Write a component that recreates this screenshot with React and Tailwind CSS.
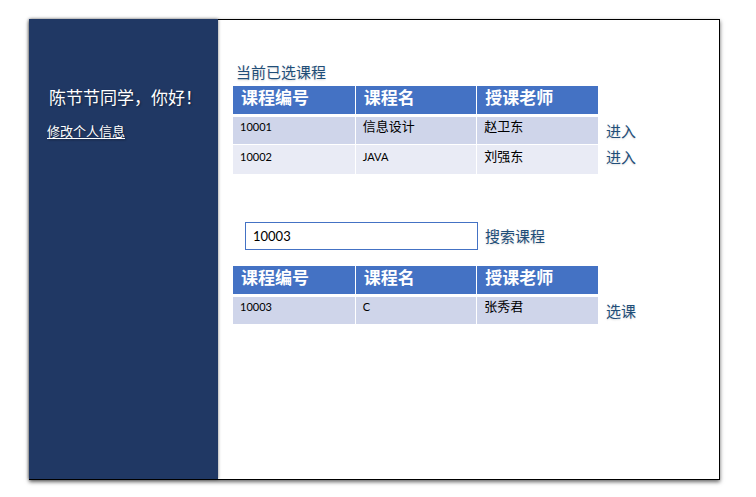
import React, { useState } from 'react';

const columns = ['课程编号', '课程名', '授课老师'];

const selectedCourses = [
  { id: '10001', name: '信息设计', teacher: '赵卫东' },
  { id: '10002', name: 'JAVA', teacher: '刘强东' },
];

const searchResults = [{ id: '10003', name: 'C', teacher: '张秀君' }];

// Latin codes and names are set smaller than the Chinese text beside them.
function Cell({ children }) {
  const latin = /^[\x20-\x7e]+$/.test(children);
  return (
    <td className="border-b border-l border-white p-0 pl-[7px] align-top first:border-l-0 group-even:pt-0.5">
      <span className={latin ? 'block text-[11px] leading-5' : 'block text-[13px] leading-[18px]'}>
        {children}
      </span>
    </td>
  );
}

function CourseTable({ label, courses, action }) {
  return (
    <div className="flex">
      <div className="flex-1">
        <table
          aria-label={label}
          className="w-full table-fixed border-separate border-spacing-0 text-left text-black"
        >
          <thead>
            <tr className="h-[31px] text-[17px] leading-6 text-white">
              {columns.map((c) => (
                <th
                  key={c}
                  scope="col"
                  className="border-b-3 border-l border-white bg-[#4472c4] p-0 pl-2 align-top font-bold first:border-l-0"
                >
                  {c}
                </th>
              ))}
            </tr>
          </thead>
          <tbody>
            {courses.map((c) => (
              <tr key={c.id} className="group h-7 bg-[#cfd5ea] even:h-[30px] even:bg-[#e9ebf5]">
                <Cell>{c.id}</Cell>
                <Cell>{c.name}</Cell>
                <Cell>{c.teacher}</Cell>
              </tr>
            ))}
          </tbody>
        </table>
      </div>
      <div className="flex w-[121px] flex-col items-start pt-8 pl-2">
        {courses.map((c) => (
          <a
            key={c.id}
            href={'#' + c.id}
            aria-label={action + ' ' + c.name}
            className="text-[15px] leading-[26px] text-[#1f4e79] [text-shadow:0_1px_2px_rgb(0_0_0/0.15)]"
          >
            {action}
          </a>
        ))}
      </div>
    </div>
  );
}

export default function App() {
  const [query, setQuery] = useState('10003');

  return (
    <div className="flex min-h-screen bg-white pt-[19px] pr-9 pb-[17px] pl-[29px] font-['Lato','Noto_Sans_CJK_SC',sans-serif]">
      <div className="flex flex-1 border-b border-black shadow-[0_2px_4px_rgb(0_0_0/0.6)]">
        <aside className="w-[189px] shrink-0 bg-[#203864] pt-[67px] pl-[18px] text-white shadow-[0_0_3px_rgb(0_0_0/0.5)]">
          <p className="pl-0.5 text-[17px] leading-6 whitespace-nowrap [text-shadow:1px_1px_2px_rgb(0_0_0/0.4)]">
            陈节节同学，你好！
          </p>
          <a
            href="#profile"
            className="mt-[11px] inline-block text-[13px] leading-5 underline underline-offset-2 [text-shadow:1px_1px_2px_rgb(0_0_0/0.4)]"
          >
            修改个人信息
          </a>
        </aside>

        <main className="flex-1 border-t border-r border-black pt-[42px] pl-[15px]">
          <h1 className="mb-1 pl-[3px] text-[15px] leading-5 font-normal text-[#1f4e79] [text-shadow:0_1px_2px_rgb(0_0_0/0.15)]">
            当前已选课程
          </h1>
          <CourseTable label="当前已选课程" courses={selectedCourses} action="进入" />

          <form
            className="mt-[47px] mb-4 ml-3 flex items-center gap-[7px]"
            onSubmit={(e) => e.preventDefault()}
          >
            <input
              type="text"
              aria-label="课程编号"
              value={query}
              onChange={(e) => setQuery(e.target.value)}
              className="h-7 w-[233px] border border-[#4472c4] bg-white px-[7px] text-[13px] text-black outline-none"
            />
            <button
              type="submit"
              className="text-[15px] leading-5 text-[#1f4e79] [text-shadow:0_1px_2px_rgb(0_0_0/0.15)]"
            >
              搜索课程
            </button>
          </form>

          <CourseTable label="搜索结果" courses={searchResults} action="选课" />
        </main>
      </div>
    </div>
  );
}
